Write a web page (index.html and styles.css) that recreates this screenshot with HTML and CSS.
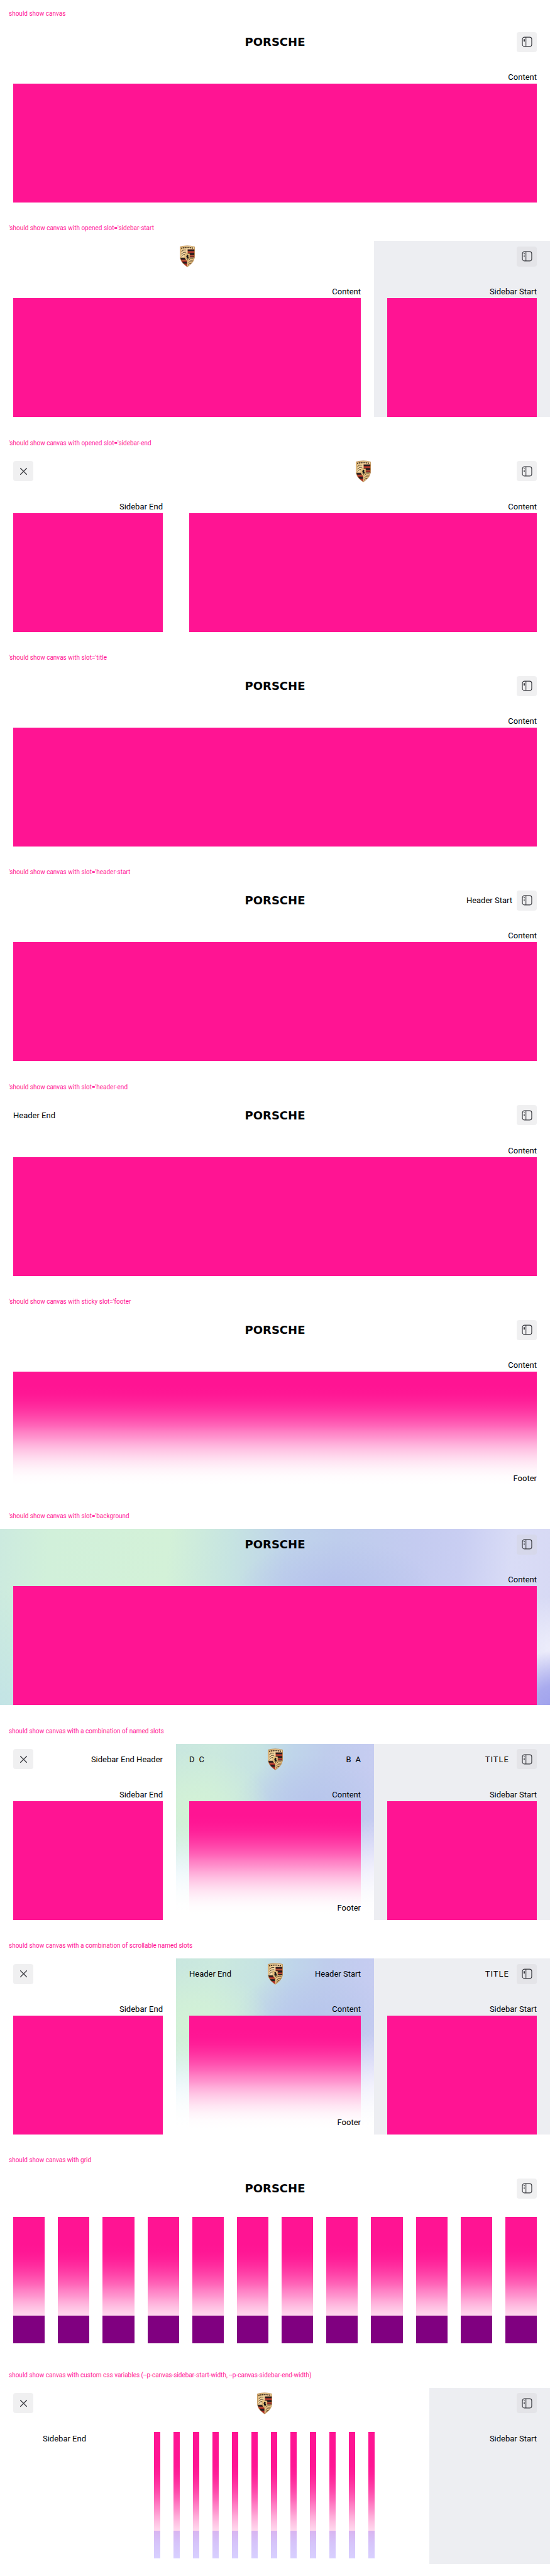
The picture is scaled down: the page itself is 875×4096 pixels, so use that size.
FILE: index.html
```
<!DOCTYPE html>
<html lang="en">
<head>
<meta charset="utf-8">
<meta name="viewport" content="width=device-width, initial-scale=1">
<title>Canvas</title>
<link rel="stylesheet" href="styles.css">
</head>
<body>
<svg class="sprite" aria-hidden="true">
  <defs>
    <linearGradient id="gold" x1="0" y1="0" x2="1" y2="1">
      <stop offset="0" stop-color="#d3a766"/><stop offset=".35" stop-color="#f7dca8"/><stop offset=".7" stop-color="#e8c283"/><stop offset="1" stop-color="#b37a40"/>
    </linearGradient>
    <clipPath id="shield"><path d="M1.800 2.600Q15 -1 28.200 2.600V20C28.200 30 20 36 15 39.200C10 36 1.800 30 1.800 20Z"/></clipPath>
  </defs>
  <symbol id="sidebar" viewBox="0 0 24 24">
    <rect x="3.500" y="3.500" width="17" height="17" rx="4" fill="none" stroke="currentColor" stroke-width="1.300"/>
    <path d="M10 3.500V20.500M5.600 7.500H8M5.600 9.600H8M5.600 11.700H8" fill="none" stroke="currentColor" stroke-width="1.200"/>
  </symbol>
  <symbol id="close" viewBox="0 0 24 24">
    <path d="M6 6L18 18M18 6L6 18" fill="none" stroke="currentColor" stroke-width="1.400"/>
  </symbol>
  <symbol id="crest" viewBox="0 0 30 40">
    <g clip-path="url(#shield)">
      <rect width="30" height="40" fill="url(#gold)"/>
      <path d="M3.500 5.300Q15 2.600 26.500 5.300" fill="none" stroke="#3c2b1c" stroke-width="2" stroke-dasharray="2.300 1"/>
      <g fill="#a92a28"><rect x="15.500" y="7.500" width="13" height="15"/><path d="M1 22.500H15V40H8L1 30Z"/></g>
      <g fill="#241f1e"><rect x="15.500" y="7.500" width="13" height="3"/><rect x="15.500" y="14" width="13" height="3.600"/><rect x="20" y="20.600" width="9" height="2"/><rect x="1" y="22.500" width="14" height="3.500"/><rect x="1" y="30" width="14" height="3.500"/></g>
      <path d="M15.500 12.200H29M15.500 19H29M1 28H15" stroke="#d29a57" stroke-width=".6"/>
      <g fill="none" stroke="#3a2d20" stroke-width="1"><path d="M4 11.500Q8 7 13 8.500M4 16Q8 11.500 13 12.500M4 20.500Q7 16 11 16.500M17 27.500Q20 23 26 24.500M17 32Q20 27 25 28.500M17 36Q19 31.500 22.500 32.500"/></g>
      <path d="M15 8V38M2 22.500H28" stroke="#e4bd7c" stroke-width=".8"/>
      <path d="M10.500 15.500Q15 14 19.500 15.500V21Q19.500 26 15 28.500Q10.500 26 10.500 21Z" fill="#edc986" stroke="#a9773c" stroke-width=".6"/>
      <path d="M13 17.500L15.500 16.800L17.500 19L16.200 19.300L17.800 21.500L16.600 24.800L15.200 26.500L15.600 23L13.500 24.500L13.800 21.500L12.200 20.500L14.300 19.500Z" fill="#191716"/>
    </g>
    <path d="M1.800 2.600Q15 -1 28.200 2.600V20C28.200 30 20 36 15 39.200C10 36 1.800 30 1.800 20Z" fill="none" stroke="#b58445" stroke-width=".9"/>
  </symbol>
</svg>

<section class="example">
  <h2 class="label">should show canvas</h2>
  <div class="canvas">
    <div class="main">
      <header class="bar"><div class="side"></div><span class="wordmark">PORSCHE</span><div class="side side-right"><button class="button" type="button" aria-label="Open sidebar"><svg class="icon"><use href="#sidebar"/></svg></button></div></header>
      <div class="content"><p class="text">Content</p><div class="box"></div></div>
    </div>
  </div>
</section>

<section class="example">
  <h2 class="label">'should show canvas with opened slot='sidebar-start</h2>
  <div class="canvas canvas-start">
    <div class="main">
      <header class="bar"><div class="side"></div><svg class="crest" role="img" aria-label="Crest"><use href="#crest"/></svg><div class="side"></div></header>
      <div class="content"><p class="text">Content</p><div class="box"></div></div>
    </div>
    <aside class="sidebar-start">
      <header class="aside-bar"><button class="button" type="button" aria-label="Close sidebar"><svg class="icon"><use href="#sidebar"/></svg></button></header>
      <div class="content"><p class="text">Sidebar Start</p><div class="box"></div></div>
    </aside>
  </div>
</section>

<section class="example">
  <h2 class="label">'should show canvas with opened slot='sidebar-end</h2>
  <div class="canvas canvas-end">
    <aside>
      <header class="aside-bar aside-bar-end"><button class="button" type="button" aria-label="Close"><svg class="icon"><use href="#close"/></svg></button></header>
      <div class="content"><p class="text">Sidebar End</p><div class="box"></div></div>
    </aside>
    <div class="main">
      <header class="bar"><div class="side"></div><svg class="crest" role="img" aria-label="Crest"><use href="#crest"/></svg><div class="side side-right"><button class="button" type="button" aria-label="Open sidebar"><svg class="icon"><use href="#sidebar"/></svg></button></div></header>
      <div class="content"><p class="text">Content</p><div class="box"></div></div>
    </div>
  </div>
</section>

<section class="example">
  <h2 class="label">'should show canvas with slot='title</h2>
  <div class="canvas">
    <div class="main">
      <header class="bar"><div class="side"></div><span class="wordmark">PORSCHE</span><div class="side side-right"><button class="button" type="button" aria-label="Open sidebar"><svg class="icon"><use href="#sidebar"/></svg></button></div></header>
      <div class="content"><p class="text">Content</p><div class="box"></div></div>
    </div>
  </div>
</section>

<section class="example">
  <h2 class="label">'should show canvas with slot='header-start</h2>
  <div class="canvas">
    <div class="main">
      <header class="bar"><div class="side"></div><span class="wordmark">PORSCHE</span><div class="side side-right"><span>Header Start</span><button class="button" type="button" aria-label="Open sidebar"><svg class="icon"><use href="#sidebar"/></svg></button></div></header>
      <div class="content"><p class="text">Content</p><div class="box"></div></div>
    </div>
  </div>
</section>

<section class="example">
  <h2 class="label">'should show canvas with slot='header-end</h2>
  <div class="canvas">
    <div class="main">
      <header class="bar"><div class="side"><span>Header End</span></div><span class="wordmark">PORSCHE</span><div class="side side-right"><button class="button" type="button" aria-label="Open sidebar"><svg class="icon"><use href="#sidebar"/></svg></button></div></header>
      <div class="content"><p class="text">Content</p><div class="box"></div></div>
    </div>
  </div>
</section>

<section class="example">
  <h2 class="label">'should show canvas with sticky slot='footer</h2>
  <div class="canvas">
    <div class="main">
      <header class="bar"><div class="side"></div><span class="wordmark">PORSCHE</span><div class="side side-right"><button class="button" type="button" aria-label="Open sidebar"><svg class="icon"><use href="#sidebar"/></svg></button></div></header>
      <div class="content"><p class="text">Content</p><div class="box"></div></div>
      <footer class="footer"><p class="text">Footer</p></footer>
    </div>
  </div>
</section>

<section class="example">
  <h2 class="label">'should show canvas with slot='background</h2>
  <div class="canvas">
    <div class="main mesh">
      <header class="bar"><div class="side"></div><span class="wordmark">PORSCHE</span><div class="side side-right"><button class="button" type="button" aria-label="Open sidebar"><svg class="icon"><use href="#sidebar"/></svg></button></div></header>
      <div class="content"><p class="text">Content</p><div class="box"></div></div>
    </div>
  </div>
</section>

<section class="example">
  <h2 class="label">should show canvas with a combination of named slots</h2>
  <div class="canvas canvas-both">
    <aside>
      <header class="aside-bar aside-bar-end"><button class="button" type="button" aria-label="Close"><svg class="icon"><use href="#close"/></svg></button><span>Sidebar End Header</span></header>
      <div class="content"><p class="text">Sidebar End</p><div class="box"></div></div>
    </aside>
    <div class="main mesh-narrow">
      <header class="bar"><div class="side"><span>D</span><span>C</span></div><svg class="crest" role="img" aria-label="Crest"><use href="#crest"/></svg><div class="side side-right"><span>B</span><span>A</span></div></header>
      <div class="content"><p class="text">Content</p><div class="box"></div></div>
      <footer class="footer"><p class="text">Footer</p></footer>
    </div>
    <aside class="sidebar-start">
      <header class="aside-bar"><h3 class="title">TITLE</h3><button class="button" type="button" aria-label="Close sidebar"><svg class="icon"><use href="#sidebar"/></svg></button></header>
      <div class="content"><p class="text">Sidebar Start</p><div class="box"></div></div>
    </aside>
  </div>
</section>

<section class="example">
  <h2 class="label">should show canvas with a combination of scrollable named slots</h2>
  <div class="canvas canvas-both">
    <aside>
      <header class="aside-bar aside-bar-end"><button class="button" type="button" aria-label="Close"><svg class="icon"><use href="#close"/></svg></button></header>
      <div class="content"><p class="text">Sidebar End</p><div class="box"></div></div>
    </aside>
    <div class="main mesh-narrow">
      <header class="bar"><div class="side"><span>Header End</span></div><svg class="crest" role="img" aria-label="Crest"><use href="#crest"/></svg><div class="side side-right"><span>Header Start</span></div></header>
      <div class="content"><p class="text">Content</p><div class="box"></div></div>
      <footer class="footer"><p class="text">Footer</p></footer>
    </div>
    <aside class="sidebar-start">
      <header class="aside-bar"><h3 class="title">TITLE</h3><button class="button" type="button" aria-label="Close sidebar"><svg class="icon"><use href="#sidebar"/></svg></button></header>
      <div class="content"><p class="text">Sidebar Start</p><div class="box"></div></div>
    </aside>
  </div>
</section>

<section class="example">
  <h2 class="label">should show canvas with grid</h2>
  <div class="canvas">
    <div class="main">
      <header class="bar"><div class="side"></div><span class="wordmark">PORSCHE</span><div class="side side-right"><button class="button" type="button" aria-label="Open sidebar"><svg class="icon"><use href="#sidebar"/></svg></button></div></header>
      <div class="content columns"><i></i><i></i><i></i><i></i><i></i><i></i><i></i><i></i><i></i><i></i><i></i><i></i></div>
      <footer class="footer"><div class="columns"><b></b><b></b><b></b><b></b><b></b><b></b><b></b><b></b><b></b><b></b><b></b><b></b></div></footer>
    </div>
  </div>
</section>

<section class="example">
  <h2 class="label">should show canvas with custom css variables (--p-canvas-sidebar-start-width, --p-canvas-sidebar-end-width)</h2>
  <div class="canvas canvas-custom">
    <aside>
      <header class="aside-bar aside-bar-end"><button class="button" type="button" aria-label="Close"><svg class="icon"><use href="#close"/></svg></button></header>
      <div class="content"><p class="text">Sidebar End</p></div>
    </aside>
    <div class="main inset">
      <header class="bar"><div class="side"></div><svg class="crest" role="img" aria-label="Crest"><use href="#crest"/></svg><div class="side"></div></header>
      <div class="content columns"><i></i><i></i><i></i><i></i><i></i><i></i><i></i><i></i><i></i><i></i><i></i><i></i></div>
      <footer class="footer"><div class="columns columns-pale"><b></b><b></b><b></b><b></b><b></b><b></b><b></b><b></b><b></b><b></b><b></b><b></b></div></footer>
    </div>
    <aside class="sidebar-start">
      <header class="aside-bar"><button class="button" type="button" aria-label="Close sidebar"><svg class="icon"><use href="#sidebar"/></svg></button></header>
      <div class="content"><p class="text">Sidebar Start</p></div>
    </aside>
  </div>
</section>
</body>
</html>
```
FILE: styles.css
```
* {
  box-sizing: border-box;
}

body {
  --gap: 21px;
  --pink: #ff1493;
  margin: 0;
  min-height: 100vh;
  display: grid;
  grid-auto-rows: 1fr;
  background: #fff;
  color: #010205;
  font: 13px/21px Roboto, sans-serif;
}

.sprite {
  position: absolute;
  width: 0;
  height: 0;
}

.label {
  margin: 0;
  padding: 2px 14px 0;
  color: var(--pink);
  font-size: 10px;
  font-weight: 400;
  line-height: 40px;
}

.canvas {
  display: grid;
  grid-template-columns: minmax(0, 1fr);
}

.canvas-start {
  grid-template-columns: minmax(0, 1fr) 280px;
}

.canvas-end {
  grid-template-columns: 280px minmax(0, 1fr);
}

.canvas-both {
  grid-template-columns: 280px minmax(0, 1fr) 280px;
}

.canvas-custom {
  grid-template-columns: 158px minmax(0, 1fr) 192px;
}

.main {
  display: grid;
  grid-template-columns: minmax(0, 1fr);
  grid-template-rows: auto 1fr;
}

.bar {
  grid-area: 1 / 1;
  height: 49px;
  padding: 0 var(--gap);
  display: grid;
  grid-template-columns: minmax(0, 1fr) auto minmax(0, 1fr);
  align-items: center;
}

.side,
.aside-bar {
  display: flex;
  align-items: center;
  gap: 7px;
}

.side-right,
.aside-bar {
  justify-content: flex-end;
}

.aside-bar {
  height: 49px;
  padding: 0 var(--gap);
}

.aside-bar-end {
  justify-content: space-between;
}

.sidebar-start {
  background: #edeef2;
}

.wordmark {
  font: bold 18px/21px "DejaVu Sans", sans-serif;
}

.crest {
  width: 26px;
  height: 35px;
}

.title {
  margin: 0 5px 0 0;
  font-size: 13px;
  font-weight: 400;
  letter-spacing: 1px;
}

.button {
  width: 32px;
  height: 32px;
  padding: 0;
  border: 0;
  border-radius: 4px;
  display: grid;
  place-items: center;
  background: rgba(210, 210, 212, .33);
  color: #33343a;
}

.icon {
  width: 21px;
  height: 21px;
}

.content {
  padding: var(--gap) var(--gap) 0;
}

.main .content {
  grid-area: 2 / 1;
}

.text {
  margin: 0;
  text-align: right;
}

.box {
  height: 189px;
  background: var(--pink);
}

.footer {
  grid-area: 1 / 1 / 3 / 2;
  align-self: end;
  height: 168px;
  padding: 0 var(--gap) 9px;
  display: flex;
  flex-direction: column;
  justify-content: flex-end;
  background: linear-gradient(to bottom,
    rgba(255, 255, 255, 0) 0,
    rgba(255, 255, 255, .013) 8%,
    rgba(255, 255, 255, .05) 15%,
    rgba(255, 255, 255, .104) 21%,
    rgba(255, 255, 255, .175) 27%,
    rgba(255, 255, 255, .259) 33%,
    rgba(255, 255, 255, .352) 39%,
    rgba(255, 255, 255, .45) 44%,
    rgba(255, 255, 255, .55) 50%,
    rgba(255, 255, 255, .648) 55%,
    rgba(255, 255, 255, .741) 61%,
    rgba(255, 255, 255, .825) 67%,
    rgba(255, 255, 255, .896) 73%,
    rgba(255, 255, 255, .951) 80%,
    rgba(255, 255, 255, .987) 87%,
    #fff 94%);
}

.columns {
  display: grid;
  grid-template-columns: repeat(12, minmax(0, 1fr));
  column-gap: var(--gap);
}

.columns i {
  height: 210px;
  background: var(--pink);
}

.columns b {
  height: 44px;
  background: #800080;
}

.columns-pale b {
  background: linear-gradient(#d8b4f0, #d6c4fa 45%, #d8d0ff);
}

.inset .content,
.inset .footer {
  padding-left: 87px;
  padding-right: 87px;
}

.mesh {
  background:
    radial-gradient(ellipse 10% 36% at 101% 105%, #9c9eec 0, rgba(156, 158, 236, .8) 45%, rgba(156, 158, 236, 0) 100%),
    radial-gradient(ellipse 12% 30% at 101% 68%, #eeeefb 0, rgba(238, 238, 251, 0) 100%),
    radial-gradient(ellipse 14% 70% at 0 105%, #c2e3e6 0, rgba(194, 227, 230, 0) 100%),
    radial-gradient(ellipse 18% 28% at 61% 34%, #b6c2ec 0, rgba(182, 194, 236, 0) 100%),
    linear-gradient(95deg, #cceadf 0, #d1f0da 9%, #d3f1d8 30%, #c6e4e1 41%, #bfd3ea 51%, #becdec 60%, #c4cbf0 74%, #c9cef2 82%, #d9dcf6 91%, #d7d9f4 100%);
}

.mesh-narrow {
  background:
    radial-gradient(ellipse 40% 34% at 8% 38%, #d3f2d6 0, rgba(211, 242, 214, .7) 40%, rgba(211, 242, 214, 0) 100%),
    radial-gradient(ellipse 24% 40% at 0 78%, #d6eef8 0, rgba(214, 238, 248, 0) 100%),
    radial-gradient(ellipse 24% 30% at 100% 72%, #dedcf9 0, rgba(222, 220, 249, 0) 100%),
    radial-gradient(ellipse 40% 26% at 70% 32%, #b8c6ec 0, rgba(184, 198, 236, 0) 100%),
    linear-gradient(98deg, #c9e7df 0, #cbe9de 18%, #c6e3e2 38%, #bfd5ea 53%, #bfcdec 68%, #c4ccf0 84%, #cacdf2 100%);
}
```
